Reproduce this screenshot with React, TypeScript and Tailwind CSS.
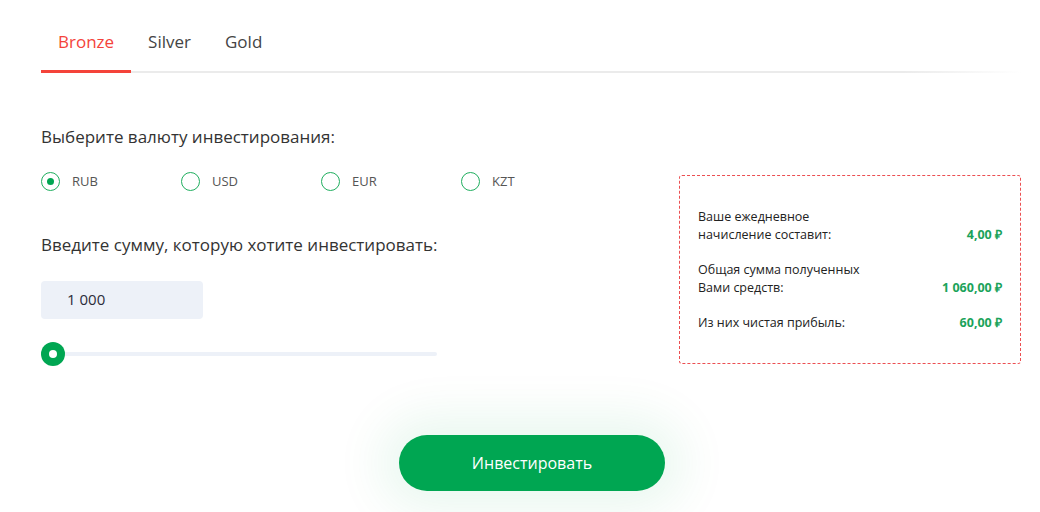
import { useState } from 'react';

const currencies = ['RUB', 'USD', 'EUR', 'KZT'];
const tabs = ['Bronze', 'Silver', 'Gold'];

const App: React.FC = () => {
    const [tab, setTab] = useState<string>('Bronze');
    const [currency, setCurrency] = useState<string>('RUB');

    return (
        <div className="w-[1040px] h-[512px] overflow-hidden bg-white pl-[41px] pr-[19px] font-['Open_Sans',sans-serif] text-[#333]">
            <div className="flex bg-[linear-gradient(to_right,#ebebeb_88%,rgba(235,235,235,0))] bg-[length:100%_2px] bg-bottom bg-no-repeat">
                {tabs.map((t) => (
                    <div
                        key={t}
                        onClick={() => setTab(t)}
                        className={
                            t === tab
                                ? 'px-[17px] pt-[30px] pb-[16px] text-[17px] leading-[24px] text-[#f4433a] border-b-[3px] border-[#f4433a] cursor-pointer'
                                : 'px-[17px] pt-[30px] pb-[16px] text-[17px] leading-[24px] text-[#444] border-b-[3px] border-transparent cursor-pointer'
                        }
                    >
                        {t}
                    </div>
                ))}
            </div>

            <div className="flex justify-between">
                <div className="pt-[52px]">
                    <div className="text-[17px] leading-[24px]">Выберите валюту инвестирования:</div>
                    <div className="flex mt-[23px]">
                        {currencies.map((c) => (
                            <div key={c} onClick={() => setCurrency(c)} className="w-[140px] flex items-center gap-[12px] cursor-pointer">
                                <div className="w-[19px] h-[19px] rounded-full border-[1.5px] border-[#1fae5e] flex items-center justify-center">
                                    {c === currency && <div className="w-[7px] h-[7px] rounded-full bg-[#00a652]" />}
                                </div>
                                <span className="text-[13px] text-[#555]">{c}</span>
                            </div>
                        ))}
                    </div>
                    <div className="mt-[41px] text-[17px] leading-[24px]">Введите сумму, которую хотите инвестировать:</div>
                    <div className="mt-[24px] w-[162px] h-[38px] rounded-[4px] bg-[#edf1f8] flex items-center pl-[26px] text-[15px] text-[#2c2c3a]">
                        1 000
                    </div>
                    <div className="relative mt-[23px] w-[397px] h-[24px] flex items-center">
                        <div className="ml-[11px] w-[385px] h-[4px] rounded-full bg-[#edf1f8]" />
                        <div className="absolute left-0 top-0 w-[24px] h-[24px] rounded-full bg-[#00a652] flex items-center justify-center">
                            <div className="w-[8px] h-[8px] rounded-full bg-white" />
                        </div>
                    </div>
                </div>

                <div className="mt-[102px] w-[342px] h-[189px] border border-dashed border-[#ec4f52] rounded-[3px] px-[18px] flex flex-col justify-center gap-[17px] text-[12.5px] leading-[18px] text-[#222]">
                    <div className="flex items-end justify-between">
                        <div>
                            Ваше ежедневное
                            <br />
                            начисление составит:
                        </div>
                        <div className="font-bold text-[#1ba35a]">4,00 ₽</div>
                    </div>
                    <div className="flex items-end justify-between">
                        <div>
                            Общая сумма полученных
                            <br />
                            Вами средств:
                        </div>
                        <div className="font-bold text-[#1ba35a]">1 060,00 ₽</div>
                    </div>
                    <div className="flex items-end justify-between">
                        <div>Из них чистая прибыль:</div>
                        <div className="font-bold text-[#1ba35a]">60,00 ₽</div>
                    </div>
                </div>
            </div>

            <div className="flex justify-center mt-[69px] pl-[2px]">
                <button className="w-[266px] h-[56px] rounded-full bg-[#00a652] text-white text-[16px] shadow-[0_0_50px_18px_rgba(0,166,82,0.09)]">
                    Инвестировать
                </button>
            </div>
        </div>
    );
};

export default App;
